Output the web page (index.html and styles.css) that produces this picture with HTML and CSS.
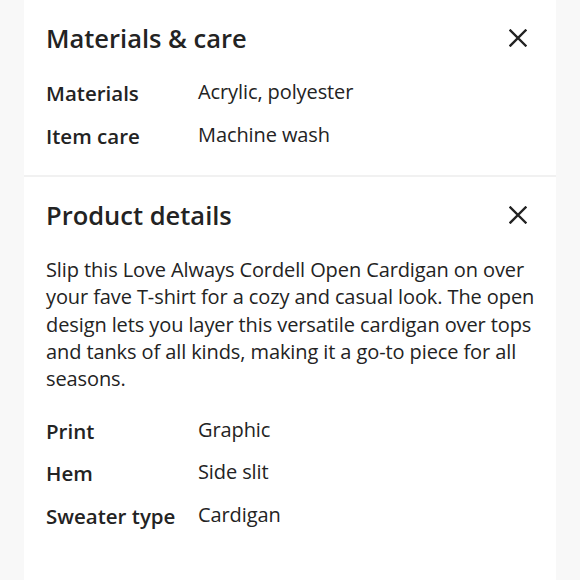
FILE: index.html
```html
<!DOCTYPE html>
<html>
<head>
<meta charset="utf-8">
<link rel="stylesheet" href="styles.css">
</head>
<body>
<div class="card">
  <section class="section first">
    <div class="head">
      <h2 class="title">Materials &amp; care</h2>
      <svg class="close" width="18" height="18" viewBox="0 0 18 18"><path d="M1.5 1.5 L16.5 16.5 M16.5 1.5 L1.5 16.5" stroke="#222" stroke-width="2.4" stroke-linecap="square" fill="none"/></svg>
    </div>
    <div class="rows">
      <div class="label">Materials</div><div class="value">Acrylic, polyester</div>
      <div class="label">Item care</div><div class="value">Machine wash</div>
    </div>
  </section>
  <div class="sep"></div>
  <section class="section second">
    <div class="head">
      <h2 class="title">Product details</h2>
      <svg class="close" width="18" height="18" viewBox="0 0 18 18"><path d="M1.5 1.5 L16.5 16.5 M16.5 1.5 L1.5 16.5" stroke="#222" stroke-width="2.4" stroke-linecap="square" fill="none"/></svg>
    </div>
    <p class="desc">Slip this Love Always Cordell Open Cardigan on over your fave T-shirt for a cozy and casual look. The open design lets you layer this versatile cardigan over tops and tanks of all kinds, making it a go-to piece for all seasons.</p>
    <div class="rows">
      <div class="label">Print</div><div class="value">Graphic</div>
      <div class="label">Hem</div><div class="value">Side slit</div>
      <div class="label">Sweater type</div><div class="value">Cardigan</div>
    </div>
  </section>
</div>
</body>
</html>
```
FILE: styles.css
```css
html, body {
  margin: 0;
  padding: 0;
  background: #f8f8f8;
  font-family: "Open Sans", "Noto Sans", sans-serif;
  color: #232323;
}
.card {
  margin: 0 24px;
  background: #fff;
  min-height: 580px;
}
.section {
  padding: 0 14px 0 22px;
}
.first {
  padding-top: 18px;
  padding-bottom: 17px;
}
.second {
  padding-top: 18px;
}
.head {
  height: 40px;
  display: flex;
  align-items: center;
  justify-content: space-between;
}
.title {
  margin: 0;
  font-size: 25.5px;
  line-height: 40px;
  font-weight: 600;
}
.close {
  display: block;
  margin-right: 15px;
}
.rows {
  display: grid;
  grid-template-columns: 152px 1fr;
  grid-auto-rows: 43px;
  margin-top: 14px;
}
.second .rows {
  grid-auto-rows: 42.7px;
  margin-top: 17px;
}
.label {
  font-size: 20.5px;
  line-height: 43px;
  font-weight: 600;
  white-space: nowrap;
}
.value {
  font-size: 20px;
  line-height: 39px;
  padding-bottom: 4px;
  font-weight: 400;
  letter-spacing: -0.1px;
}
.sep {
  height: 2px;
  background: #f1f1f1;
}
.desc {
  margin: 21px 0 0;
  font-size: 20px;
  line-height: 27.35px;
  letter-spacing: -0.1px;
}
```
